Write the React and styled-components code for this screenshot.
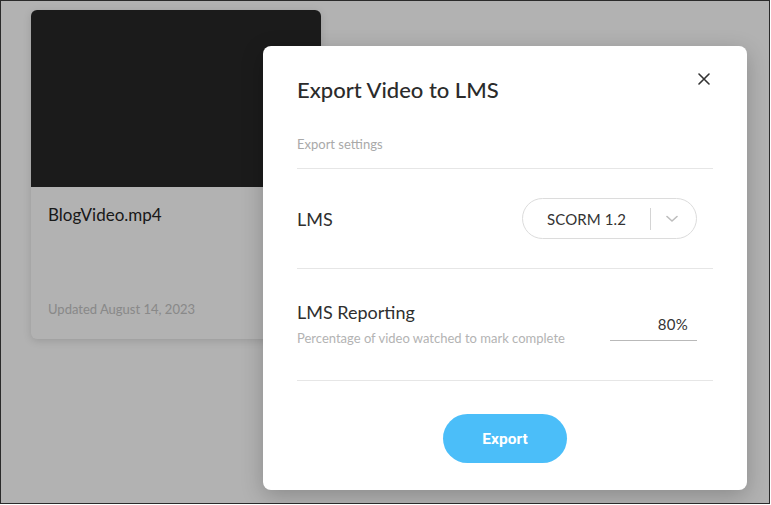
import React from "react";
import styled, { createGlobalStyle } from "styled-components";

const Global = createGlobalStyle`
  html, body { margin: 0; padding: 0; background: #fff; }
  body { font-family: Lato, "Open Sans", sans-serif; }
  * { box-sizing: border-box; }
`;

const Frame = styled.div`
  position: relative;
  width: 770px;
  height: 504px;
  border: 1px solid #2a2a2a;
  background: #ffffff;
  overflow: hidden;
`;

const Grid = styled.div`
  display: flex;
  padding: 9px 0 0 30px;
`;

const Card = styled.div`
  width: 290px;
  height: 329px;
  border-radius: 6px;
  background: #ffffff;
  box-shadow: 0 2px 8px rgba(0, 0, 0, 0.14);
  display: flex;
  flex-direction: column;
  overflow: hidden;
`;

const Thumb = styled.div`
  height: 177px;
  background: #282828;
`;

const CardBody = styled.div`
  flex: 1;
  display: flex;
  flex-direction: column;
  justify-content: space-between;
  padding: 17px 17px 22px;
`;

const CardTitle = styled.div`
  font-size: 17px;
  line-height: 22px;
  color: #262626;
`;

const CardMeta = styled.div`
  font-size: 13px;
  line-height: 16px;
  color: #c4c4c4;
`;

const Overlay = styled.div`
  position: absolute;
  inset: 0;
  background: rgba(0, 0, 0, 0.3);
  display: flex;
  justify-content: flex-end;
  align-items: flex-start;
  padding: 45px 22px 0 0;
`;

const Modal = styled.div`
  position: relative;
  width: 484px;
  height: 444px;
  background: #ffffff;
  border-radius: 8px;
  box-shadow: 0 6px 22px rgba(0, 0, 0, 0.22);
  padding: 30px 34px 27px;
  display: flex;
  flex-direction: column;
`;

const Close = styled.button`
  position: absolute;
  top: 25px;
  right: 35px;
  width: 16px;
  height: 16px;
  padding: 0;
  border: 0;
  background: transparent;
  display: flex;
  align-items: center;
  justify-content: center;
  cursor: pointer;
`;

const Title = styled.h2`
  margin: 0;
  font-size: 22px;
  line-height: 28px;
  font-weight: 500;
  color: #2b2b2b;
`;

const Section = styled.div`
  margin-top: 31px;
  padding-bottom: 15px;
  border-bottom: 1px solid #e6e6e6;
  font-size: 13px;
  line-height: 18px;
  color: #a9a9a9;
`;

const Row = styled.div`
  display: flex;
  justify-content: space-between;
  align-items: ${(p) => (p.$top ? "flex-start" : "center")};
  height: ${(p) => p.$h}px;
  padding: ${(p) => (p.$top ? "31px 16px 0 0" : "0 16px 0 0")};
  border-bottom: 1px solid #e6e6e6;
`;

const Label = styled.div`
  font-size: 18px;
  line-height: 24px;
  color: #2f2f2f;
`;

const Hint = styled.div`
  margin-top: 6px;
  font-size: 13px;
  line-height: 17px;
  color: #b3b3b3;
`;

const Select = styled.div`
  width: 175px;
  height: 41px;
  border: 1px solid #dcdcdc;
  border-radius: 21px;
  display: flex;
  align-items: center;
`;

const SelectValue = styled.div`
  width: 127px;
  text-align: center;
  font-size: 15px;
  color: #333;
  letter-spacing: 0.1px;
`;

const SelectSep = styled.div`
  width: 1px;
  height: 22px;
  background: #d4d4d4;
`;

const SelectArrow = styled.div`
  flex: 1;
  display: flex;
  justify-content: center;
  align-items: center;
  padding-right: 4px;
`;

const Percent = styled.div`
  margin-top: 11px;
  width: 87px;
  height: 30px;
  border-bottom: 1px solid #b9b9b9;
  text-align: right;
  padding: 4px 9px 0 0;
  font-size: 15px;
  line-height: 18px;
  color: #333;
  letter-spacing: 0.3px;
`;

const Footer = styled.div`
  flex: 1;
  display: flex;
  justify-content: center;
  align-items: flex-end;
`;

const ExportButton = styled.button`
  width: 124px;
  height: 49px;
  border: 0;
  border-radius: 25px;
  background: #4bbef9;
  color: #fff;
  font-family: Roboto, "Open Sans", sans-serif;
  font-weight: 700;
  font-size: 15.5px;
  cursor: pointer;
`;

export default function App() {
  return (
    <>
      <Global />
      <Frame>
        <Grid>
          <Card>
            <Thumb />
            <CardBody>
              <CardTitle>BlogVideo.mp4</CardTitle>
              <CardMeta>Updated August 14, 2023</CardMeta>
            </CardBody>
          </Card>
        </Grid>
        <Overlay>
          <Modal>
            <Close aria-label="Close">
              <svg width="12" height="12" viewBox="0 0 12 12">
                <path d="M1 1L11 11M11 1L1 11" stroke="#333" strokeWidth="1.6" strokeLinecap="round" />
              </svg>
            </Close>
            <Title>Export Video to LMS</Title>
            <Section>Export settings</Section>
            <Row $h={100}>
              <Label>LMS</Label>
              <Select>
                <SelectValue>SCORM 1.2</SelectValue>
                <SelectSep />
                <SelectArrow>
                  <svg width="12" height="8" viewBox="0 0 12 8">
                    <path d="M1 1.5L6 6L11 1.5" stroke="#bdbdbd" strokeWidth="1.6" fill="none" strokeLinecap="round" strokeLinejoin="round" />
                  </svg>
                </SelectArrow>
              </Select>
            </Row>
            <Row $h={112} $top>
              <div>
                <Label>LMS Reporting</Label>
                <Hint>Percentage of video watched to mark complete</Hint>
              </div>
              <Percent>80%</Percent>
            </Row>
            <Footer>
              <ExportButton>Export</ExportButton>
            </Footer>
          </Modal>
        </Overlay>
      </Frame>
    </>
  );
}
